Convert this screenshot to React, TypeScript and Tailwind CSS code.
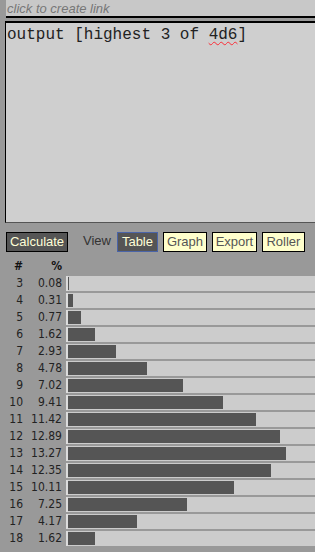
const rows: [number, string][] = [
  [3, "0.08"],
  [4, "0.31"],
  [5, "0.77"],
  [6, "1.62"],
  [7, "2.93"],
  [8, "4.78"],
  [9, "7.02"],
  [10, "9.41"],
  [11, "11.42"],
  [12, "12.89"],
  [13, "13.27"],
  [14, "12.35"],
  [15, "10.11"],
  [16, "7.25"],
  [17, "4.17"],
  [18, "1.62"],
];

const numFont = { fontFamily: '"DejaVu Sans Condensed", "Liberation Sans", sans-serif' };

export default function App() {
  return (
    <div className="min-h-screen w-full overflow-hidden bg-[#999999] font-['Liberation_Sans',Arial,sans-serif]">
      {/* link box */}
      <div className="ml-[6px] h-[18px] border-b-2 border-black bg-[#c8c8c8] pl-[1px] pt-[1px] text-[13px] italic leading-[15px] text-[#777]">
        click to create link
      </div>

      {/* input */}
      <div className="ml-[5px] mt-[3px] h-[202px] border-t-2 border-l border-b border-t-black border-l-black border-b-[#555] bg-[#cfcfcf] pl-[1px] pt-[3px] font-['Liberation_Mono',monospace] text-[16px] leading-[18px] text-[#222]">
        output [highest 3 of{" "}
        <span className="underline decoration-wavy decoration-red-500 decoration-1 underline-offset-2">4d6</span>]
      </div>

      {/* buttons */}
      <div className="mt-[9px] flex h-[20px] items-stretch pl-[6px] text-[13px] leading-[18px]">
        <button className="w-[62px] border border-black bg-[#555] text-center text-[#ffffd8]">Calculate</button>
        <span className="ml-[15px] text-[#333]">View</span>
        <button className="ml-[6px] w-[41px] border border-[#4a64a8] bg-[#555] text-center text-[#ffffd8]">Table</button>
        <button className="ml-[5px] w-[44px] border border-black bg-[#ffffcc] text-center text-[#555]">Graph</button>
        <button className="ml-[5px] w-[45px] border border-black bg-[#ffffcc] text-center text-[#555]">Export</button>
        <button className="ml-[5px] w-[43px] border border-black bg-[#ffffcc] text-center text-[#555]">Roller</button>
      </div>

      {/* header */}
      <div className="flex h-[24px] pt-[7px] text-[12px] font-bold leading-[15px] text-[#111]" style={numFont}>
        <div className="w-[23px] text-right">#</div>
        <div className="w-[39px] text-right">%</div>
      </div>

      {/* table */}
      <div className="flex flex-col" style={numFont}>
        {rows.map(([n, p]) => (
          <div key={n} className="flex h-[17px] text-[12px] leading-[15px] text-[#222]">
            <div className="w-[23px] text-right">{n}</div>
            <div className="w-[39px] text-right">{p}</div>
            <div className="ml-[4px] flex h-[15px] flex-1 items-center border-l-2 border-[#dcdcdc] bg-[#cccccc]">
              <div className="h-[13px] bg-[#555]" style={{ width: Math.max(1, parseFloat(p) * 16.45) }} />
            </div>
          </div>
        ))}
      </div>
    </div>
  );
}
